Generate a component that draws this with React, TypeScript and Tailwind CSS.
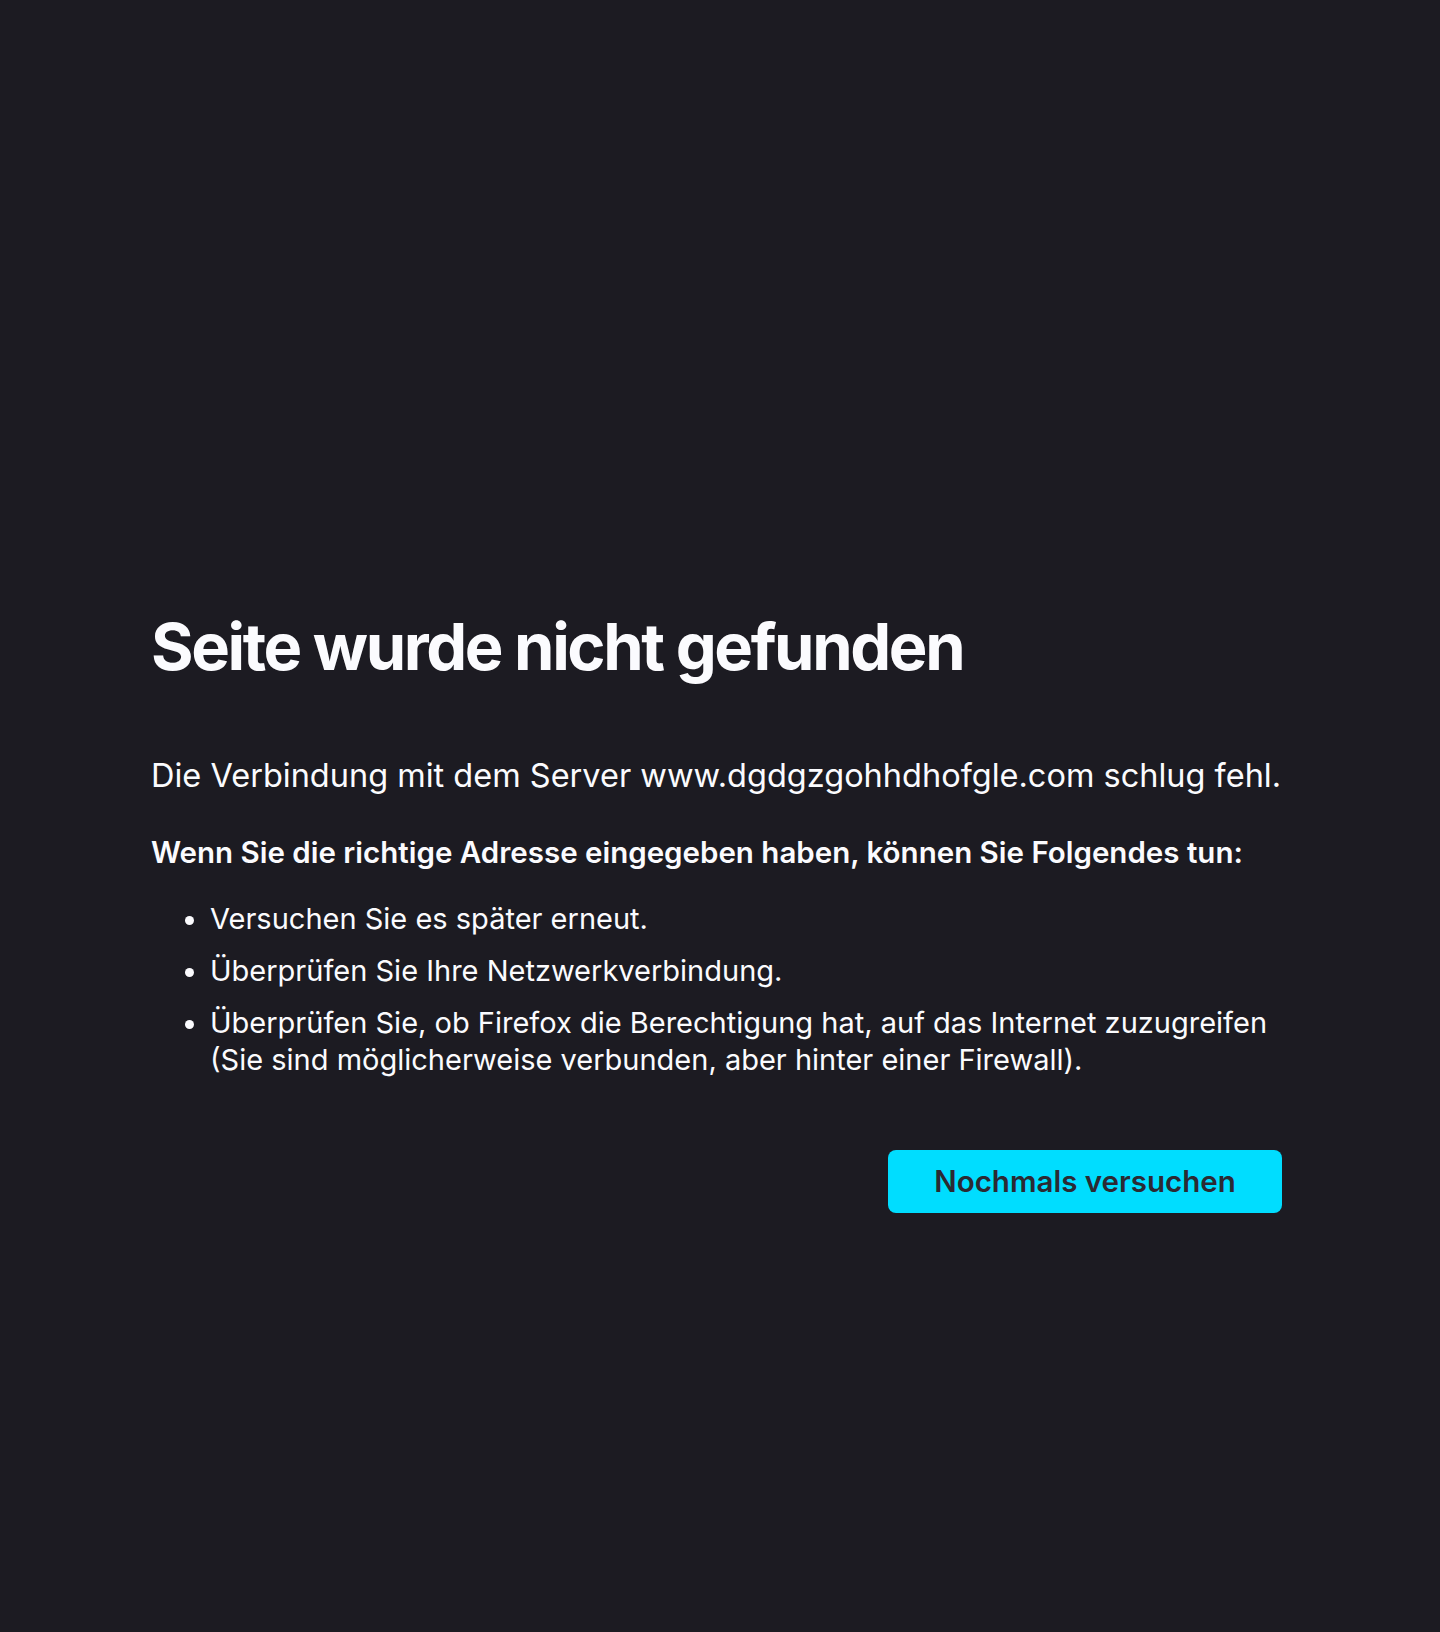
import React from "react";

export default function App() {
  return (
    <div
      className="min-h-[1632px] w-full bg-[#1c1b22] text-[#fbfbfe]"
      style={{ fontFamily: "Inter, 'Noto Sans', 'Liberation Sans', sans-serif" }}
    >
      <div className="flex w-[1282px] flex-col pl-[151px] pt-[607px]">
        <h1 className="text-[65px] font-bold leading-[80px] tracking-[-2.4px]">
          Seite wurde nicht gefunden
        </h1>
        <p className="mt-[68px] text-[32.5px] leading-[42px]">
          Die Verbindung mit dem Server www.dgdgzgohhdhofgle.com schlug fehl.
        </p>
        <p className="mt-[36px] text-[29.5px] font-semibold leading-[38px]">
          Wenn Sie die richtige Adresse eingegeben haben, können Sie Folgendes tun:
        </p>
        <ul className="mt-[29px] flex list-disc flex-col gap-[15px] pl-[59px] text-[29px] leading-[37px]">
          <li>Versuchen Sie es später erneut.</li>
          <li>Überprüfen Sie Ihre Netzwerkverbindung.</li>
          <li>
            Überprüfen Sie, ob Firefox die Berechtigung hat, auf das Internet zuzugreifen (Sie
            sind möglicherweise verbunden, aber hinter einer Firewall).
          </li>
        </ul>
        <div className="mt-[72px] flex justify-end">
          <button className="h-[63px] w-[394px] rounded-[8px] bg-[#00ddff] text-[29.5px] font-semibold text-[#2b2a33]">
            Nochmals versuchen
          </button>
        </div>
      </div>
    </div>
  );
}
